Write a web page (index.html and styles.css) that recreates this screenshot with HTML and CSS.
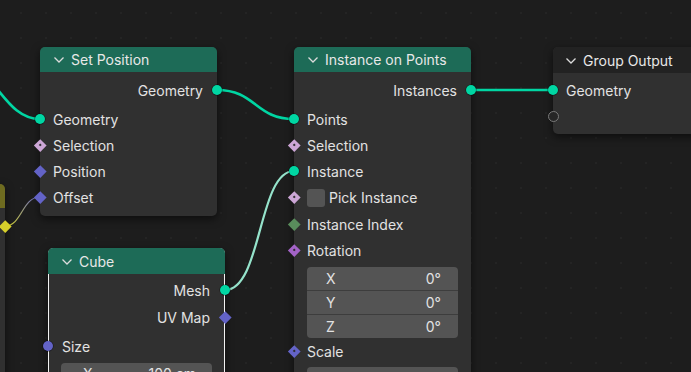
FILE: index.html
```html
<!DOCTYPE html>
<html>
<head>
<meta charset="utf-8">
<link rel="stylesheet" href="styles.css">
</head>
<body>
<div class="canvas">
  <svg class="links" width="691" height="372" viewBox="0 0 691 372">
    <defs>
      <linearGradient id="yp" x1="5" y1="226" x2="40" y2="197" gradientUnits="userSpaceOnUse">
        <stop offset="0" stop-color="#d6d62b"/>
        <stop offset="1" stop-color="#6363c7"/>
      </linearGradient>
    </defs>
    <path class="link" d="M -45 62 C -5 62, 2 119, 40 119"/>
    <path class="link" d="M 217 90 C 256 90, 255 119, 294 119"/>
    <path class="link" d="M 471 90 L 553 90"/>
    <path class="link pale" d="M 225 290 C 262 290, 258 171, 294 171"/>
    <path class="link thin" d="M 5 226 C 22 226, 22 197, 40 197"/>
  </svg>

  <div class="node partial">
    <div class="node-header olive"></div>
    <div class="partial-body">
      <span class="socket diamond yellow"></span>
    </div>
  </div>

  <div class="node setpos">
    <div class="node-header"><svg class="chev" width="10" height="6" viewBox="0 0 10 6"><polyline points="0.5,0.5 5,5 9.5,0.5"/></svg><span>Set Position</span></div>
    <div class="node-body">
      <div class="row out"><span>Geometry</span><span class="socket geo"></span></div>
      <div class="row"><span class="socket geo"></span><span>Geometry</span></div>
      <div class="row"><span class="socket diamond bool dot"></span><span>Selection</span></div>
      <div class="row"><span class="socket diamond vec"></span><span>Position</span></div>
      <div class="row"><span class="socket diamond vec"></span><span>Offset</span></div>
    </div>
  </div>

  <div class="node iop">
    <div class="node-header"><svg class="chev" width="10" height="6" viewBox="0 0 10 6"><polyline points="0.5,0.5 5,5 9.5,0.5"/></svg><span>Instance on Points</span></div>
    <div class="node-body">
      <div class="row out"><span>Instances</span><span class="socket geo"></span></div>
      <div class="row"><span class="socket geo"></span><span>Points</span></div>
      <div class="row"><span class="socket diamond bool dot"></span><span>Selection</span></div>
      <div class="row"><span class="socket geo"></span><span>Instance</span></div>
      <div class="row pick"><span class="socket diamond bool dot"></span><span class="check"></span><span>Pick Instance</span></div>
      <div class="row"><span class="socket diamond int"></span><span>Instance Index</span></div>
      <div class="row"><span class="socket diamond rot dot"></span><span>Rotation</span></div>
      <div class="vfield">
        <div class="vrow"><span>X</span><span>0°</span></div>
        <div class="vrow"><span>Y</span><span>0°</span></div>
        <div class="vrow"><span>Z</span><span>0°</span></div>
      </div>
      <div class="row"><span class="socket diamond vec dot"></span><span>Scale</span></div>
      <div class="vfield"></div>
    </div>
  </div>

  <div class="node gout">
    <div class="node-header dark"><svg class="chev" width="10" height="6" viewBox="0 0 10 6"><polyline points="0.5,0.5 5,5 9.5,0.5"/></svg><span>Group Output</span></div>
    <div class="node-body">
      <div class="row"><span class="socket geo"></span><span>Geometry</span></div>
      <div class="row"><span class="socket hollow"></span></div>
    </div>
  </div>

  <div class="node cube">
    <div class="node-header"><svg class="chev" width="10" height="6" viewBox="0 0 10 6"><polyline points="0.5,0.5 5,5 9.5,0.5"/></svg><span>Cube</span></div>
    <div class="node-body">
      <div class="row out"><span>Mesh</span><span class="socket geo"></span></div>
      <div class="row out"><span>UV Map</span><span class="socket diamond vec"></span></div>
      <div class="row size"><span class="socket vecc"></span><span>Size</span></div>
      <div class="vfield">
        <div class="vrow"><span>X</span><span>100 cm</span></div>
      </div>
    </div>
  </div>
</div>
</body>
</html>
```

FILE: styles.css
```css
* { box-sizing: border-box; }
html, body { margin: 0; padding: 0; background: #1d1d1d; }
body { font-family: Inter, "Noto Sans", "DejaVu Sans", sans-serif; font-size: 14px; color: #e2e2e2; }

.canvas {
  position: relative;
  width: 691px;
  height: 372px;
  overflow: hidden;
  background-color: #1d1d1d;
  background-image: radial-gradient(circle at 1px 1px, #242424 0.9px, transparent 1.3px);
  background-size: 25px 25px;
  background-position: 20px 12px;
}

.links { position: absolute; left: 0; top: 0; z-index: 1; }
.link { fill: none; stroke: #00d6a3; stroke-width: 2.6; }
.link.pale { stroke: #95e3cb; stroke-width: 2.2; }
.link.thin { stroke: url(#yp); stroke-width: 1.2; }

.node {
  position: absolute;
  z-index: 2;
  background: #303030;
  border-radius: 5px;
  box-shadow: 0 3px 8px rgba(0, 0, 0, 0.55);
}
.node-header {
  height: 25px;
  background: #1d6b57;
  border-radius: 5px 5px 0 0;
  display: flex;
  align-items: center;
  gap: 7px;
  padding-left: 14px;
  color: #e8e8e8;
  white-space: nowrap;
}
.node-header.dark { background: #222222; height: 26px; padding-left: 13px; }
.node-header.olive { background: #6e6b20; height: 24px; border-radius: 0 5px 0 0; }
.chev { flex: none; margin-top: 1px; }
.chev polyline { fill: none; stroke: #dcdcdc; stroke-width: 1.3; }

.node-body { padding: 5px 0 6px; }
.row {
  position: relative;
  height: 26px;
  display: flex;
  align-items: center;
  padding: 0 13px;
  white-space: nowrap;
}
.row.out { justify-content: flex-end; padding-right: 14px; }
.row.out:first-child { margin-bottom: 3px; }
.row.pick { height: 27px; }

.socket {
  position: absolute;
  left: -5px;
  top: 50%;
  width: 10px;
  height: 10px;
  margin-top: -5px;
  border-radius: 50%;
}
.row.out .socket { left: auto; right: -5px; }
.socket.geo { background: #00d6a3; box-shadow: 0 0 0 0.5px rgba(0,0,0,0.6); }
.socket.vecc { background: #6363c7; box-shadow: 0 0 0 0.5px rgba(0,0,0,0.6); }
.socket.hollow { border: 1.3px solid #7a7a7a; background: #262626; width: 11px; height: 11px; left: -5.5px; margin-top: -5.5px; }
.socket.diamond {
  width: 8.5px;
  height: 8.5px;
  margin-top: -4.25px;
  left: -4.25px;
  border-radius: 0;
  transform: rotate(45deg);
}
.row.out .socket.diamond { right: -4.25px; }
.socket.bool { background: #cca6d6; }
.socket.vec { background: #6363c7; }
.socket.int { background: #598c5c; }
.socket.rot { background: #a363c7; }
.socket.yellow { background: #d6cf2b; }
.socket.dot::after {
  content: "";
  position: absolute;
  left: 3.25px;
  top: 3.25px;
  width: 2px;
  height: 2px;
  background: #2b2b2b;
}

.check {
  width: 18px;
  height: 18px;
  background: #545454;
  border-radius: 3px;
  margin-right: 4px;
  flex: none;
}

.vfield {
  margin: 4px 13px 0;
  height: 71px;
  background: #545454;
  border-radius: 4px;
  display: flex;
  flex-direction: column;
}
.vrow {
  flex: 1;
  display: flex;
  align-items: center;
  justify-content: space-between;
  padding: 0 17px 0 19px;
}
.vrow + .vrow { border-top: 1px solid #3d3d3d; }

/* node placement on the canvas */
.setpos { left: 40px; top: 47px; width: 177px; height: 169px; }
.iop { left: 294px; top: 47px; width: 177px; height: 340px; }
.iop .vfield:last-child { margin-top: 3px; height: 30px; }
.gout { left: 553px; top: 47px; width: 160px; height: 87px; }
.gout .node-body { padding-top: 4px; }
.cube { left: 48px; top: 248px; width: 177px; height: 150px; border: 1px solid #f2f2f2; }
.cube .node-header { margin: -1px -1px 0; height: 26px; padding-left: 14px; }
.cube .node-body { padding-top: 3px; }
.cube .row.out:first-child { margin-bottom: 1px; }
.cube .row.out .socket { right: -6px; }
.cube .row.out .socket.diamond { right: -5.25px; }
.cube .row .socket.vecc { left: -6px; }
.cube .row.size { margin-top: 3px; }
.cube .vfield { height: 20px; margin: 4px 12px 0; }
.cube .vrow { padding: 0 16px 0 22px; }

.partial { left: -20px; top: 184px; width: 25px; height: 200px; border-radius: 0 5px 5px 0; }
.partial-body { position: relative; height: 36px; }
.partial-body .socket { left: auto; right: -4.25px; top: 18px; }
```
